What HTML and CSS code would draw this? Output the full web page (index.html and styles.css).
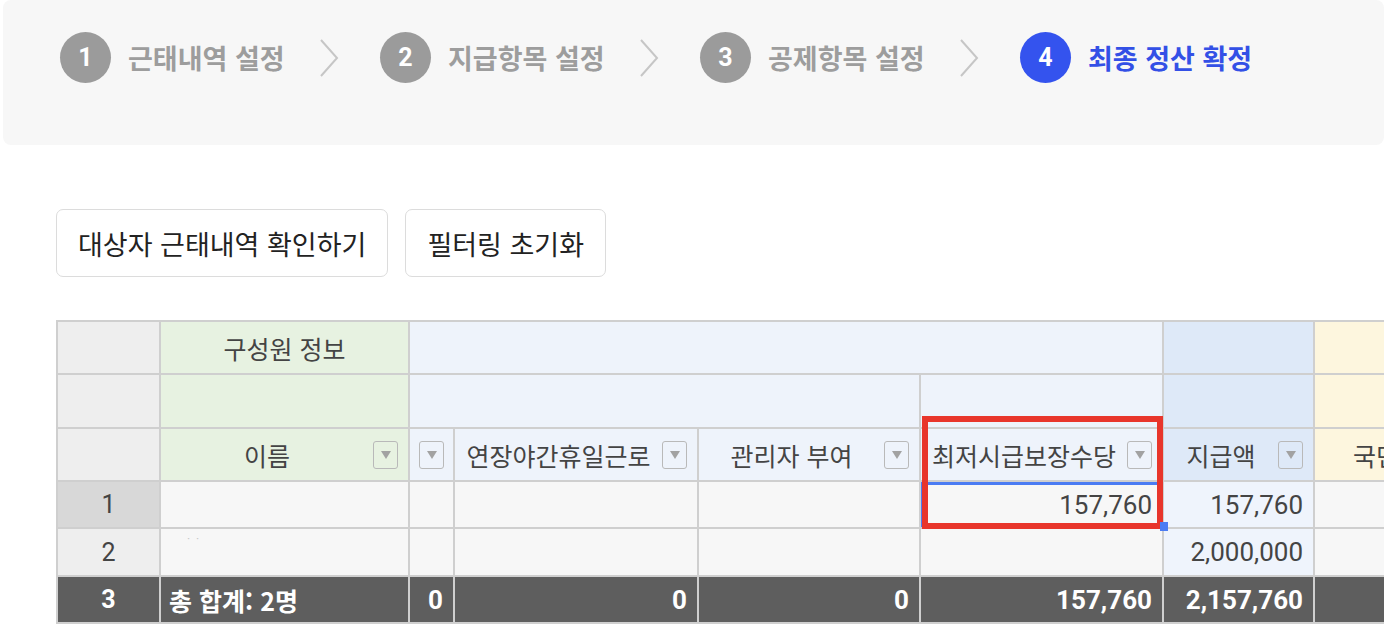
FILE: index.html
```html
<!DOCTYPE html>
<html lang="ko">

<head>
    <meta charset="UTF-8">
    <meta name="viewport" content="width=device-width, initial-scale=1.0">
    <title>최종 정산 확정</title>
    <link rel="stylesheet" href="styles.css">
</head>

<body>
    <!-- 단계 표시 -->
    <div class="steps">
        <div class="step"><span class="num">1</span><span class="label">근태내역 설정</span></div>
        <svg class="chev" width="20" height="38" viewBox="0 0 20 38"><polyline points="2,1 18,19 2,37" /></svg>
        <div class="step"><span class="num">2</span><span class="label">지급항목 설정</span></div>
        <svg class="chev" width="20" height="38" viewBox="0 0 20 38"><polyline points="2,1 18,19 2,37" /></svg>
        <div class="step"><span class="num">3</span><span class="label">공제항목 설정</span></div>
        <svg class="chev" width="20" height="38" viewBox="0 0 20 38"><polyline points="2,1 18,19 2,37" /></svg>
        <div class="step active"><span class="num">4</span><span class="label">최종 정산 확정</span></div>
    </div>

    <div class="content">
        <div class="toolbar">
            <button type="button">대상자 근태내역 확인하기</button>
            <button type="button">필터링 초기화</button>
        </div>

        <div class="grid-wrap">
            <table class="grid">
                <colgroup>
                    <col style="width:103px">
                    <col style="width:249px">
                    <col style="width:45px">
                    <col style="width:244px">
                    <col style="width:222px">
                    <col style="width:243px">
                    <col style="width:151px">
                    <col style="width:180px">
                </colgroup>
                <thead>
                    <tr class="hr1">
                        <th class="rh"></th>
                        <th class="member">구성원 정보</th>
                        <th class="pay" colspan="4"></th>
                        <th class="total"></th>
                        <th class="deduct"></th>
                    </tr>
                    <tr class="hr2">
                        <th class="rh"></th>
                        <th class="member"></th>
                        <th class="pay" colspan="3"></th>
                        <th class="pay"></th>
                        <th class="total"></th>
                        <th class="deduct"></th>
                    </tr>
                    <tr class="hr3">
                        <th class="rh"></th>
                        <th class="member"><div class="hcell"><span>이름</span><i class="filter"></i></div></th>
                        <th class="pay"><div class="hcell only"><i class="filter"></i></div></th>
                        <th class="pay"><div class="hcell"><span>연장야간휴일근로</span><i class="filter"></i></div></th>
                        <th class="pay"><div class="hcell"><span>관리자 부여</span><i class="filter"></i></div></th>
                        <th class="pay"><div class="hcell"><span>최저시급보장수당</span><i class="filter"></i></div></th>
                        <th class="total"><div class="hcell"><span>지급액</span><i class="filter"></i></div></th>
                        <th class="deduct"><div class="hcell"><span>국민연금</span></div></th>
                    </tr>
                </thead>
                <tbody>
                    <tr>
                        <td class="rh on">1</td>
                        <td></td>
                        <td></td>
                        <td></td>
                        <td></td>
                        <td class="num selected">157,760</td>
                        <td class="num sum">157,760</td>
                        <td></td>
                    </tr>
                    <tr>
                        <td class="rh">2</td>
                        <td class="blur">·&nbsp;&nbsp;·</td>
                        <td></td>
                        <td></td>
                        <td></td>
                        <td></td>
                        <td class="num sum">2,000,000</td>
                        <td></td>
                    </tr>
                </tbody>
                <tfoot>
                    <tr>
                        <td class="rh">3</td>
                        <td class="left">총 합계: 2명</td>
                        <td class="num">0</td>
                        <td class="num">0</td>
                        <td class="num">0</td>
                        <td class="num">157,760</td>
                        <td class="num">2,157,760</td>
                        <td></td>
                    </tr>
                </tfoot>
            </table>
            <div class="highlight"></div>
            <div class="handle"></div>
        </div>
    </div>
</body>

</html>
```

FILE: styles.css
```css
html,
body {
    margin: 0;
    overflow: hidden;
}

body {
    font-family: Roboto, "Noto Sans CJK KR", sans-serif;
    background: #fff;
    color: #333;
}

.steps {
    display: flex;
    align-items: center;
    height: 145px;
    box-sizing: border-box;
    margin-left: 3px;
    padding: 0 0 30px 57px;
    background: #f7f7f7;
    border-radius: 8px;
}

.step {
    display: flex;
    align-items: center;
    gap: 17px;
}

.step .num {
    display: flex;
    align-items: center;
    justify-content: center;
    width: 51px;
    height: 51px;
    border-radius: 50%;
    background: #9b9b9b;
    color: #fff;
    font-size: 25px;
    font-weight: 700;
}

.step .label {
    width: 157px;
    font-family: "Noto Sans CJK KR", sans-serif;
    font-size: 27px;
    font-weight: 700;
    color: #9d9d9d;
    white-space: nowrap;
}

.step.active .num {
    background: #3453ee;
}

.step.active .label {
    color: #3350e6;
}

.chev {
    margin: 0 41px 0 34px;
}

.chev polyline {
    fill: none;
    stroke: #c6c6c6;
    stroke-width: 2;
}

.content {
    padding-left: 56px;
}

.toolbar {
    display: flex;
    gap: 17px;
    margin-top: 64px;
}

.toolbar button {
    height: 68px;
    padding: 0 21px;
    font-family: "Noto Sans CJK KR", sans-serif;
    font-size: 27px;
    color: #222;
    background: #fff;
    border: 1.5px solid #dcdcdc;
    border-radius: 7px;
}

.grid-wrap {
    position: relative;
    margin-top: 43px;
    width: 1437px;
}

.grid {
    table-layout: fixed;
    width: 1437px;
    border-collapse: collapse;
    font-size: 25px;
}

.grid th,
.grid td {
    border: 2px solid #cfcfcf;
    padding: 0;
    white-space: nowrap;
    overflow: hidden;
}

.grid th {
    font-family: "Noto Sans CJK KR", sans-serif;
    font-weight: 400;
    color: #444;
    text-align: center;
}

.hr1 th {
    height: 51px;
}

.hr2 th {
    height: 52px;
}

.hr3 th {
    height: 51px;
}

.grid .rh {
    background: #eeeeee;
    text-align: center;
}

.member {
    background: #e7f2e1;
}

.pay {
    background: #eef3fb;
}

.total {
    background: #dee9f8;
}

.deduct {
    background: #fdf6de;
}

.hcell {
    display: flex;
    align-items: center;
    padding-right: 10px;
}

.hcell span {
    flex: 1;
    text-align: center;
}

.hcell.only {
    justify-content: center;
    padding-right: 0;
}

.filter {
    display: flex;
    align-items: center;
    justify-content: center;
    width: 25px;
    height: 28px;
    box-sizing: border-box;
    border: 1.5px solid #b9b9b9;
    border-radius: 3px;
}

.filter::after {
    content: "";
    border-left: 5px solid transparent;
    border-right: 5px solid transparent;
    border-top: 8px solid #a2a2a2;
}

.grid tbody td {
    height: 45px;
    background: #f7f7f7;
    color: #444;
}

.grid tbody tr:nth-child(2) td {
    height: 46px;
}

.grid tbody .rh.on {
    background: #d8d8d8;
}

.grid tbody .rh {
    background: #eeeeee;
}

.grid tbody .sum {
    background: #eff4fc;
}

.grid td.num {
    font-size: 26px;
    text-align: right;
    padding-right: 10px;
}

.grid td.selected {
    box-shadow: inset 3px 3px 0 #4b7cf3;
}

.grid td.blur {
    color: #c8c8c8;
    font-size: 12px;
    line-height: 20px;
    vertical-align: top;
    padding-left: 26px;
}

.grid tfoot td {
    height: 45px;
    background: #5e5e5e;
    color: #fff;
    font-weight: 700;
}

.grid tfoot .rh {
    background: #5e5e5e;
}

.grid tfoot td.left {
    padding-left: 8px;
    font-family: "Noto Sans CJK KR", sans-serif;
}

.highlight {
    position: absolute;
    left: 866px;
    top: 96px;
    width: 241px;
    height: 113px;
    box-sizing: border-box;
    border: 6px solid #e8352b;
}

.handle {
    position: absolute;
    left: 1104px;
    top: 202px;
    width: 8px;
    height: 9px;
    background: #4b7cf3;
}
```
